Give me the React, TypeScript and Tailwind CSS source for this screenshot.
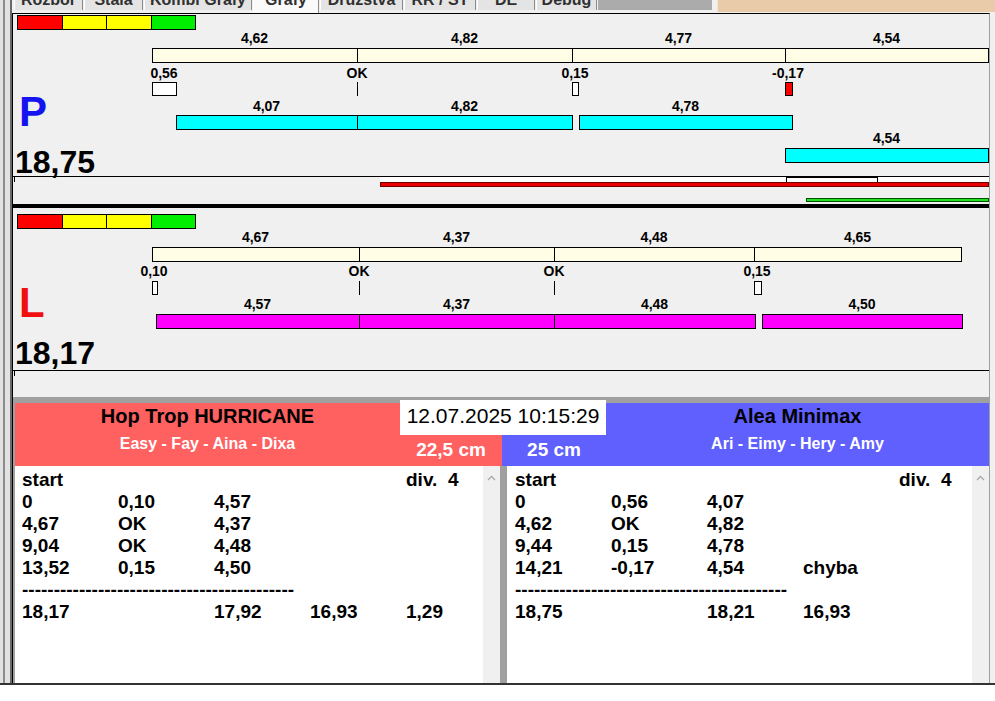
import React from "react";

// x of the chart panel's inner left edge (after its 1px border)
const OX = 13;

type Seg = [number, number, string];
type Mark = { x1: number; x2: number; kind: "box" | "tick" | "bad" };

interface PanelData {
  legendCls: string;
  letter: string;
  letterCls: string;
  total: string;
  totalCls: string;
  baseTop: number;
  baseLabelTop: number;
  base: Seg[];
  valTop: number;
  vals: [number, string][];
  markTop: number;
  marks: Mark[];
  rows: { top: number; labelTop: number; fill: string; segs: Seg[] }[];
  race?: boolean;
}

const panels: PanelData[] = [
  {
    legendCls: "mt-[1px]",
    letter: "P",
    letterCls: "mt-[61px] text-[#1414f0]",
    total: "18,75",
    totalCls: "mt-[13px]",
    baseTop: 34,
    baseLabelTop: 17,
    base: [
      [152, 357, "4,62"],
      [357, 572, "4,82"],
      [572, 785, "4,77"],
      [785, 988, "4,54"],
    ],
    valTop: 52,
    vals: [
      [164, "0,56"],
      [357, "OK"],
      [575, "0,15"],
      [788, "-0,17"],
    ],
    markTop: 68,
    marks: [
      { x1: 152, x2: 176, kind: "box" },
      { x1: 357, x2: 357, kind: "tick" },
      { x1: 572, x2: 578, kind: "box" },
      { x1: 785, x2: 792, kind: "bad" },
    ],
    rows: [
      {
        top: 101,
        labelTop: 85,
        fill: "bg-[#00ffff]",
        segs: [
          [176, 357, "4,07"],
          [357, 572, "4,82"],
          [579, 792, "4,78"],
        ],
      },
      { top: 134, labelTop: 117, fill: "bg-[#00ffff]", segs: [[785, 988, "4,54"]] },
    ],
    race: true,
  },
  {
    legendCls: "mt-[6px]",
    letter: "L",
    letterCls: "mt-[53px] text-[#f01010]",
    total: "18,17",
    totalCls: "mt-[13px]",
    baseTop: 39,
    baseLabelTop: 22,
    base: [
      [152, 359, "4,67"],
      [359, 554, "4,37"],
      [554, 754, "4,48"],
      [754, 961, "4,65"],
    ],
    valTop: 56,
    vals: [
      [154, "0,10"],
      [359, "OK"],
      [554, "OK"],
      [757, "0,15"],
    ],
    markTop: 73,
    marks: [
      { x1: 152, x2: 157, kind: "box" },
      { x1: 359, x2: 359, kind: "tick" },
      { x1: 554, x2: 554, kind: "tick" },
      { x1: 754, x2: 761, kind: "box" },
    ],
    rows: [
      {
        top: 106,
        labelTop: 89,
        fill: "bg-[#ff00ff]",
        segs: [
          [156, 359, "4,57"],
          [359, 554, "4,37"],
          [554, 755, "4,48"],
          [762, 962, "4,50"],
        ],
      },
    ],
  },
];

const tabs: { label: string; w: string; sel?: boolean }[] = [
  { label: "Rozbor", w: "w-[69px]" },
  { label: "Stala", w: "w-[59px]" },
  { label: "Kombi Grafy", w: "w-[108px]" },
  { label: "Grafy", w: "w-[66px]", sel: true },
  { label: "Družstva", w: "w-[83px]" },
  { label: "RR / ST", w: "w-[72px]" },
  { label: "DE", w: "w-[58px]" },
  { label: "Debug", w: "w-[61px]" },
];

function Num({ c, top, text }: { c: number; top: number; text: string }) {
  return (
    <div
      className="absolute w-[80px] text-center text-[14px] leading-none font-bold text-black"
      style={{ left: c - OX - 40, top }}
    >
      {text}
    </div>
  );
}

function Bar({ x1, x2, top, fill }: { x1: number; x2: number; top: number; fill: string }) {
  return (
    <div
      className={"absolute h-[15px] border border-black " + fill}
      style={{ left: x1 - OX, top, width: x2 - x1 + 1 }}
    />
  );
}

function Legend({ className }: { className: string }) {
  return (
    <div className={"flex ml-[4px] " + className}>
      <div className="w-[46px] h-[15px] border border-black bg-[#ff0000]" />
      <div className="w-[45px] h-[15px] border border-black bg-[#ffff00] -ml-px" />
      <div className="w-[46px] h-[15px] border border-black bg-[#ffff00] -ml-px" />
      <div className="w-[45px] h-[15px] border border-black bg-[#00ee00] -ml-px" />
    </div>
  );
}

function ChartPanel({ d, h }: { d: PanelData; h: string }) {
  return (
    <div className={"relative flex flex-col items-start " + h}>
      <Legend className={d.legendCls} />
      <div className={"ml-[6px] text-[42px] leading-[42px] font-bold " + d.letterCls}>{d.letter}</div>
      <div className={"ml-[2px] text-[32px] leading-[32px] font-bold text-black " + d.totalCls}>{d.total}</div>

      {d.base.map(([x1, x2, t]) => (
        <React.Fragment key={"b" + x1}>
          <Num c={(x1 + x2) / 2} top={d.baseLabelTop} text={t} />
          <Bar x1={x1} x2={x2} top={d.baseTop} fill="bg-[#fffde6]" />
        </React.Fragment>
      ))}

      {d.vals.map(([c, t]) => (
        <Num key={"v" + c} c={c} top={d.valTop} text={t} />
      ))}

      {d.marks.map((m) =>
        m.kind === "tick" ? (
          <div
            key={"m" + m.x1}
            className="absolute w-px h-[14px] bg-black"
            style={{ left: m.x1 - OX, top: d.markTop }}
          />
        ) : (
          <div
            key={"m" + m.x1}
            className={
              "absolute h-[14px] border border-black " +
              (m.kind === "bad" ? "bg-[#ff0000]" : "bg-white")
            }
            style={{ left: m.x1 - OX, top: d.markTop, width: m.x2 - m.x1 + 1 }}
          />
        )
      )}

      {d.rows.map((r) =>
        r.segs.map(([x1, x2, t]) => (
          <React.Fragment key={"r" + r.top + x1}>
            <Num c={(x1 + x2) / 2} top={r.labelTop} text={t} />
            <Bar x1={x1} x2={x2} top={r.top} fill={r.fill} />
          </React.Fragment>
        ))
      )}

      {/* time line */}
      <div className="absolute left-0 right-0 top-[162px] h-px bg-black" />
      <div className="absolute left-[1px] top-[163px] w-px h-[5px] bg-black" />
      {d.race && (
        <>
          <div className="absolute left-[367px] right-0 top-[163px] h-[5px] bg-white" />
          <div className="absolute left-[773px] w-[92px] top-[163px] h-[6px] border border-black bg-white" />
          <div className="absolute left-[367px] right-0 top-[168px] h-[5px] border border-[#700000] bg-[#e80000]" />
          <div className="absolute left-[793px] right-0 top-[184px] h-[4px] border border-[#005000] bg-[#22e022]" />
        </>
      )}
    </div>
  );
}

const dashes = "-".repeat(43);

function Sheet({ rows, total, padCls }: { rows: string[][]; total: string[]; padCls: string }) {
  return (
    <div className="flex h-full bg-white">
      <div
        className={
          "flex-1 min-w-0 overflow-hidden pt-[3px] text-[19px] leading-[22px] font-bold text-black " + padCls
        }
      >
        {rows.map((r, i) => (
          <div key={i} className="grid grid-cols-[96px_96px_96px_96px_1fr] whitespace-pre">
            {r.map((c, j) => (
              <div key={j}>{c}</div>
            ))}
          </div>
        ))}
        <div className="whitespace-pre">{dashes}</div>
        <div className="grid grid-cols-[96px_96px_96px_96px_1fr]">
          {total.map((c, j) => (
            <div key={j}>{c}</div>
          ))}
        </div>
      </div>
      <div className="w-[17px] shrink-0 bg-[#f0f0f0] flex justify-center pt-[9px]">
        <svg width="9" height="6" viewBox="0 0 9 6">
          <polyline points="1,5 4.5,1.5 8,5" fill="none" stroke="#a8a8a8" strokeWidth="1.3" />
        </svg>
      </div>
    </div>
  );
}

export default function App() {
  return (
    <div className="w-[995px] h-[701px] flex flex-col overflow-hidden bg-white font-['Liberation_Sans',Arial,sans-serif]">
      {/* tab strip, mostly scrolled off the top */}
      <div className="h-[13px] flex bg-[#f0f0f0] overflow-hidden">
        <div className="w-[12px] h-full flex bg-[#e2e2e2]">
          <div className="w-[3px]" />
          <div className="w-[2px] bg-[#8c8c8c]" />
          <div className="flex-1" />
          <div className="w-[2px] bg-[#6a6a6a]" />
        </div>
        <div className="w-[2px]" />
        {tabs.map((t) => (
          <div
            key={t.label}
            className={
              "overflow-hidden flex justify-center border-l border-l-white border-r border-r-[#8a8a8a] mr-[1px] " +
              t.w +
              (t.sel ? " h-[13px] bg-[#fafafa]" : " h-[10px] bg-[#e4e4e4]")
            }
          >
            <span className="mt-[-8px] text-[16px] leading-none font-bold text-[#303030] whitespace-nowrap">
              {t.label}
            </span>
          </div>
        ))}
        <div className="w-[114px] h-[10px] bg-[#ababab]" />
        <div className="w-[5px]" />
        <div className="flex-1 h-[12px] bg-[#e9caa9] border-l border-[#f6e4d2]" />
      </div>

      {/* window body */}
      <div className="h-[670px] flex">
        <div className="w-[12px] flex bg-[#e2e2e2]">
          <div className="w-[3px]" />
          <div className="w-[2px] bg-[#8c8c8c]" />
          <div className="flex-1" />
          <div className="w-[2px] bg-[#6a6a6a]" />
        </div>

        <div className="w-[978px] flex flex-col bg-[#f0f0f0] border-l border-t border-black border-r border-r-[#a0a0a0]">
          <ChartPanel d={panels[0]} h="h-[190px]" />
          <div className="h-[4px] bg-black" />
          <ChartPanel d={panels[1]} h="h-[189px]" />

          {/* result sheets */}
          <div className="h-[286px] flex flex-col bg-[#a0a0a0] pt-[3px] pl-[2px]">
            <div className="h-[66px] flex items-end">
              <div className="w-[385px] h-[63px] bg-[#ff6060] flex flex-col items-center">
                <div className="mt-[3px] text-[20px] leading-[20px] font-bold text-black">Hop Trop HURRICANE</div>
                <div className="mt-[10px] text-[16px] leading-[16px] font-bold text-white">Easy - Fay - Aina - Dixa</div>
              </div>
              <div className="w-[206px] h-[66px] flex flex-col">
                <div className="h-[35px] bg-white flex justify-center pt-[5px] text-[21px] leading-none text-black">
                  12.07.2025 10:15:29
                </div>
                <div className="flex-1 flex">
                  <div className="w-[102px] bg-[#ff6060] flex justify-center pt-[5px] text-[19px] leading-none font-bold text-white">
                    22,5 cm
                  </div>
                  <div className="flex-1 bg-[#6060ff] flex justify-center pt-[5px] text-[19px] leading-none font-bold text-white">
                    25 cm
                  </div>
                </div>
              </div>
              <div className="flex-1 h-[63px] bg-[#6060ff] flex flex-col items-center">
                <div className="mt-[3px] text-[20px] leading-[20px] font-bold text-black">Alea Minimax</div>
                <div className="mt-[10px] text-[16px] leading-[16px] font-bold text-white">Ari - Eimy - Hery - Amy</div>
              </div>
            </div>

            <div className="h-[217px] flex gap-[7px]">
              <div className="w-[485px] shrink-0">
                <Sheet
                  padCls="pl-[7px]"
                  rows={[
                    ["start", "", "", "", "div.  4"],
                    ["0", "0,10", "4,57", "", ""],
                    ["4,67", "OK", "4,37", "", ""],
                    ["9,04", "OK", "4,48", "", ""],
                    ["13,52", "0,15", "4,50", "", ""],
                  ]}
                  total={["18,17", "", "17,92", "16,93", "1,29"]}
                />
              </div>
              <div className="flex-1 min-w-0">
                <Sheet
                  padCls="pl-[8px]"
                  rows={[
                    ["start", "", "", "", "div.  4"],
                    ["0", "0,56", "4,07", "", ""],
                    ["4,62", "OK", "4,82", "", ""],
                    ["9,44", "0,15", "4,78", "", ""],
                    ["14,21", "-0,17", "4,54", "chyba", ""],
                  ]}
                  total={["18,75", "", "18,21", "16,93", ""]}
                />
              </div>
            </div>
          </div>
        </div>

        <div className="w-[5px] bg-[#f0f0f0]" />
      </div>

      <div className="h-[2px] bg-[#333333]" />
      <div className="flex-1 bg-white" />
    </div>
  );
}
